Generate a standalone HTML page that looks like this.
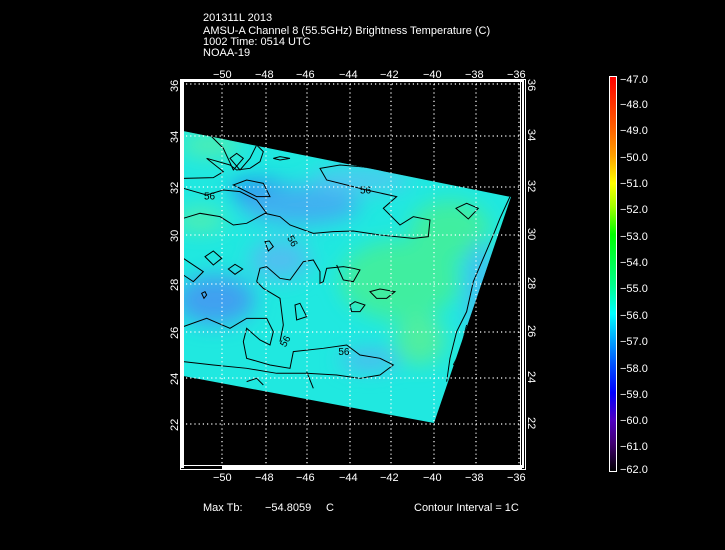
<!DOCTYPE html>
<html><head><meta charset="utf-8"><style>
html,body{margin:0;padding:0;background:#000;width:725px;height:550px;overflow:hidden}
svg{display:block}
text{font-family:"Liberation Sans",sans-serif;fill:#fff;font-size:11px}
</style></head><body>
<svg width="725" height="550" viewBox="0 0 725 550" xmlns="http://www.w3.org/2000/svg">
<defs>
<clipPath id="sw"><polygon points="183,131 511,197 434,423 183,376"/></clipPath>
<filter id="bl" x="-50%" y="-50%" width="200%" height="200%"><feGaussianBlur stdDeviation="10"/></filter>
<linearGradient id="cb" x1="0" y1="0" x2="0" y2="1">
<stop offset="0" stop-color="#ff0000"/>
<stop offset="0.13" stop-color="#ff6000"/>
<stop offset="0.2" stop-color="#ffa000"/>
<stop offset="0.27" stop-color="#ffff00"/>
<stop offset="0.33" stop-color="#a0ff00"/>
<stop offset="0.4" stop-color="#00ff00"/>
<stop offset="0.53" stop-color="#00ff90"/>
<stop offset="0.6" stop-color="#00ffff"/>
<stop offset="0.67" stop-color="#00a0ff"/>
<stop offset="0.73" stop-color="#0050ff"/>
<stop offset="0.8" stop-color="#0000ff"/>
<stop offset="0.87" stop-color="#5000c0"/>
<stop offset="0.93" stop-color="#400070"/>
<stop offset="1" stop-color="#000000"/>
</linearGradient>
</defs>
<text x="203" y="21">201311L 2013</text>
<text x="203" y="34">AMSU-A Channel 8 (55.5GHz) Brightness Temperature (C)</text>
<text x="203" y="45">1002 Time: 0514 UTC</text>
<text x="203" y="56">NOAA-19</text>

<g clip-path="url(#sw)">
<rect x="180" y="120" width="340" height="310" fill="#20e8e0"/>
<g filter="url(#bl)">
<ellipse cx="260" cy="190" rx="30" ry="10" fill="#2080f0"/>
<ellipse cx="300" cy="205" rx="60" ry="20" fill="#40b0f0"/>
<ellipse cx="215" cy="300" rx="40" ry="25" fill="#40a0f0"/>
<ellipse cx="280" cy="260" rx="30" ry="20" fill="#50c0f0"/>
<ellipse cx="360" cy="180" rx="50" ry="12" fill="#50c8f0"/>
<ellipse cx="370" cy="360" rx="30" ry="10" fill="#50b8f0"/>
<ellipse cx="400" cy="280" rx="60" ry="40" fill="#40eea0"/>
<ellipse cx="450" cy="230" rx="40" ry="30" fill="#40eea0"/>
<ellipse cx="420" cy="340" rx="25" ry="25" fill="#50eea0"/>
<ellipse cx="480" cy="290" rx="15" ry="50" fill="#40c0f0"/>
<ellipse cx="210" cy="145" rx="30" ry="12" fill="#50eeb0"/>
<ellipse cx="200" cy="220" rx="25" ry="12" fill="#50eeb0"/>
</g>
<g transform="translate(180,125) scale(0.3333)" fill="none" stroke="#000" stroke-width="3">
<path d="M10,280 L60,265 120,275 160,300 200,295 255,265 300,275 330,300 400,325 460,320 520,318 600,330 700,340 745,335 750,285 700,275 660,300 610,250 650,215 560,195 440,165 420,130 480,120 540,125 620,135 700,145"/>
<path d="M10,190 L80,210 130,195 180,200 230,225 260,265"/>
<path d="M160,180 L200,165 250,175 270,215 230,215 Z"/>
<path d="M10,160 L100,158 130,140 80,100 150,120 170,135 210,130 240,110 250,80 230,60 210,100 180,135 150,100 170,85 190,100 160,135 130,70 90,30"/>
<path d="M280,100 L300,95 330,100 300,105 Z"/>
<path d="M10,400 L70,440 40,470 10,450"/>
<path d="M230,470 L240,430 260,425 300,460 330,465 370,410 400,405 420,440 420,475 430,470 440,430 490,425 520,430 540,435 520,470 490,465 470,420"/>
<path d="M10,605 L80,580 150,610 200,580 260,580 280,620 270,660 240,645 200,610 190,650 200,700 270,720 330,730 340,680 430,670 500,660 540,690 600,700 640,720 600,750 540,760 470,750 380,745 290,745 200,730 100,720 10,710"/>
<path d="M230,470 L250,490 300,520 310,600 300,650"/>
<path d="M990,215 L960,280 940,330 910,400 880,470 860,560 830,620 810,700 800,770"/>
<path d="M860,600 L840,680 820,720"/>
<path d="M828,250 L860,235 895,250 865,282 Z"/>
<path d="M510,540 L525,530 555,540 540,560 515,560 Z"/>
<path d="M570,500 L600,492 645,500 620,520 590,520 Z"/>
<path d="M345,540 L360,535 380,575 350,585 Z"/>
<path d="M75,395 L100,378 125,400 100,420 Z"/>
<path d="M145,432 L165,418 188,432 165,448 Z"/>
<path d="M255,350 L268,348 280,365 265,378 Z"/>
<path d="M65,505 L75,500 80,510 72,520 Z"/>
<path d="M380,740 L400,790 M200,770 L230,760 250,780"/>
</g>
<g transform="translate(180,125) scale(0.3333)">
<text x="72" y="224" style="fill:#000;font-size:30px">56</text>
<text x="540" y="205" style="fill:#000;font-size:30px">56</text>
<text x="475" y="690" style="fill:#000;font-size:30px">56</text>
<text x="320" y="350" transform="rotate(60 330 345)" style="fill:#000;font-size:30px">56</text>
<text x="300" y="660" transform="rotate(-60 315 650)" style="fill:#000;font-size:30px">56</text>
</g>
</g>

<g stroke="#fff" stroke-width="1.2" stroke-dasharray="1.2 3" fill="none">
<path d="M222,84V465 M266,84V465 M307,84V465 M350,84V465 M391,84V465 M434,84V465 M476,84V465 M519,84V465"/>
<path d="M186,84H520 M186,136H520 M186,187H520 M186,235H520 M186,284H520 M186,332H520 M186,378H520 M186,424H520"/>
</g>

<g fill="#fff">
<rect x="180" y="79" width="345" height="1"/>
<rect x="180" y="79" width="1" height="391"/>
<rect x="180" y="469" width="345" height="1"/>
<rect x="525" y="79" width="1" height="391"/>
<rect x="181" y="80" width="343" height="2"/>
<rect x="181" y="80" width="3" height="388"/>
<rect x="522" y="80" width="2" height="388"/>
<rect x="222" y="466" width="300" height="3"/>
<rect x="183" y="465" width="340" height="1"/>
<rect x="520" y="82" width="1" height="384"/>
</g>

<g>
<text x="213" y="78">−50</text><text x="255" y="78">−48</text><text x="296" y="78">−46</text><text x="339" y="78">−44</text><text x="380" y="78">−42</text><text x="423" y="78">−40</text><text x="465" y="78">−38</text><text x="507" y="78">−36</text>
<text x="213" y="481">−50</text><text x="255" y="481">−48</text><text x="296" y="481">−46</text><text x="339" y="481">−44</text><text x="380" y="481">−42</text><text x="423" y="481">−40</text><text x="465" y="481">−38</text><text x="507" y="481">−36</text>
</g>
<g>
<text transform="translate(178,92) rotate(-90)">36</text>
<text transform="translate(178,143) rotate(-90)">34</text>
<text transform="translate(178,194) rotate(-90)">32</text>
<text transform="translate(178,242) rotate(-90)">30</text>
<text transform="translate(178,291) rotate(-90)">28</text>
<text transform="translate(178,339) rotate(-90)">26</text>
<text transform="translate(178,385) rotate(-90)">24</text>
<text transform="translate(178,431) rotate(-90)">22</text>
<text transform="translate(528,79) rotate(90)">36</text>
<text transform="translate(528,129) rotate(90)">34</text>
<text transform="translate(528,180) rotate(90)">32</text>
<text transform="translate(528,228) rotate(90)">30</text>
<text transform="translate(528,277) rotate(90)">28</text>
<text transform="translate(528,325) rotate(90)">26</text>
<text transform="translate(528,371) rotate(90)">24</text>
<text transform="translate(528,417) rotate(90)">22</text>
</g>

<rect x="609.5" y="76.5" width="7" height="395" fill="url(#cb)" stroke="#fff" stroke-width="1"/>
<g>
<text x="620" y="83">−47.0</text><text x="620" y="108">−48.0</text><text x="620" y="134">−49.0</text><text x="620" y="161">−50.0</text><text x="620" y="187">−51.0</text><text x="620" y="213">−52.0</text><text x="620" y="240">−53.0</text><text x="620" y="266">−54.0</text><text x="620" y="292">−55.0</text><text x="620" y="319">−56.0</text><text x="620" y="345">−57.0</text><text x="620" y="372">−58.0</text><text x="620" y="398">−59.0</text><text x="620" y="424">−60.0</text><text x="620" y="450">−61.0</text><text x="620" y="473">−62.0</text>
</g>

<text x="203" y="511">Max Tb:</text>
<text x="265" y="511">−54.8059</text>
<text x="326" y="511">C</text>
<text x="414" y="511">Contour Interval = 1C</text>
</svg>
</body></html>
